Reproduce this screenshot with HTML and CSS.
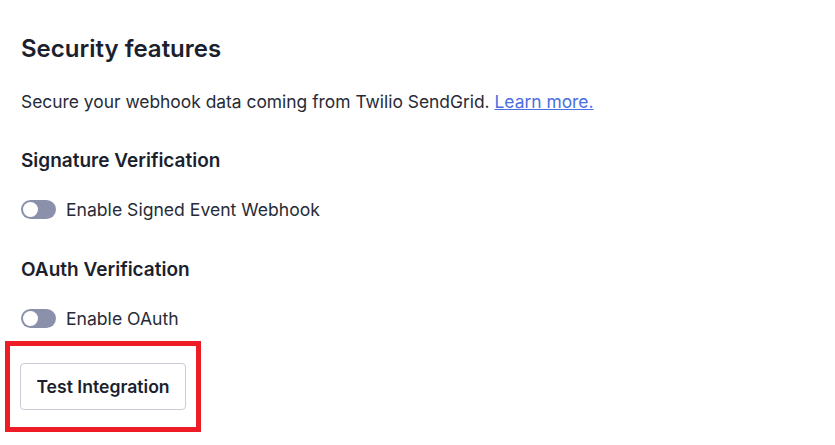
FILE: index.html
```html
<!DOCTYPE html>
<html lang="en">
<head>
    <meta charset="UTF-8">
    <meta name="viewport" content="width=device-width, initial-scale=1.0">
    <title>Security features</title>
    <link rel="stylesheet" href="styles.css">
</head>
<body>
    <div class="container">
        <h2 class="title">Security features</h2>
        <p class="intro">Secure your webhook data coming from Twilio SendGrid. <a href="#">Learn more.</a></p>

        <!-- Signature verification -->
        <h3 class="section-title first">Signature Verification</h3>
        <label class="toggle-row">
            <span class="toggle"><span class="knob"></span></span>
            Enable Signed Event Webhook
        </label>

        <!-- OAuth verification -->
        <h3 class="section-title">OAuth Verification</h3>
        <label class="toggle-row">
            <span class="toggle"><span class="knob"></span></span>
            Enable OAuth
        </label>

        <div class="highlight">
            <button type="button" class="btn">Test Integration</button>
        </div>
    </div>
</body>
</html>
```

FILE: styles.css
```css
body {
    font-family: Inter, "Noto Sans", Arial, sans-serif;
    margin: 0;
    padding: 0;
    background-color: #ffffff;
    color: #1b1f2e;
}
.container {
    padding: 33px 0 0 5px;
}
.title {
    font-size: 24px;
    line-height: 32px;
    font-weight: 600;
    margin: 0 0 25px 16px;
}
.intro {
    font-size: 17.4px;
    line-height: 24px;
    margin: 0 0 0 16px;
    color: #272b37;
}
.intro a {
    color: #4b6ee0;
    text-decoration: underline;
}
.section-title {
    font-size: 19px;
    line-height: 26px;
    font-weight: 600;
    margin: 36px 0 23px 16px;
}
.section-title.first {
    margin-top: 34px;
}
.toggle-row {
    display: flex;
    align-items: center;
    gap: 10px;
    height: 24px;
    margin-left: 16px;
    font-size: 17.6px;
    color: #272b37;
}
.toggle {
    width: 35px;
    height: 19px;
    border-radius: 10px;
    background-color: #8c91ab;
    display: flex;
    align-items: center;
    padding-left: 2px;
    box-sizing: border-box;
}
.knob {
    width: 15px;
    height: 15px;
    border-radius: 50%;
    background-color: #ffffff;
}
.highlight {
    display: inline-block;
    margin-top: 11px;
    border: 5px solid #ee1c25;
    padding: 17px 10px;
}
.btn {
    display: block;
    width: 166px;
    height: 47px;
    font-family: Inter, "Noto Sans", Arial, sans-serif;
    font-size: 17.6px;
    font-weight: 600;
    color: #1b1f2e;
    background-color: #ffffff;
    border: 1px solid #c9ccd6;
    border-radius: 4px;
    cursor: pointer;
}
```
